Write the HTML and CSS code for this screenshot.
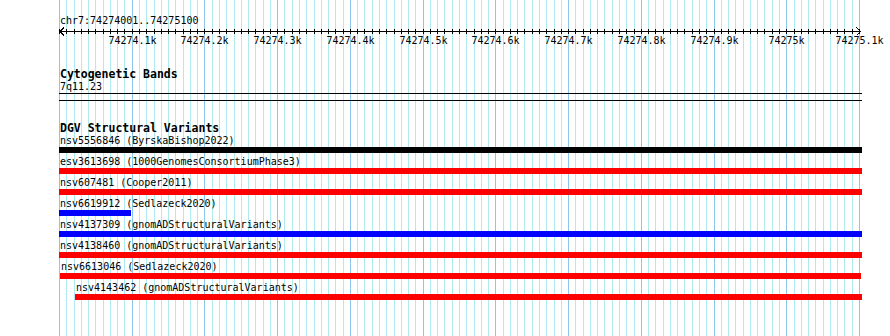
FILE: index.html
```html
<!DOCTYPE html>
<html lang="en">
  <head>
    <meta charset="UTF-8" />
    <meta name="viewport" content="width=device-width, initial-scale=1.0" />
    <title>chr7:74274001..74275100</title>
    <link rel="stylesheet" href="styles.css">
  </head>
  <body>
    <div class="view">
      <div class="tracks">
        <!-- Gridlines (drawn by script) -->
        <svg class="grid" id="grid" width="803" height="336"></svg>

        <!-- Ruler -->
        <div class="ruler">
          <div class="ruler-label">chr7:74274001..74275100</div>
          <svg class="ruler-scale" id="scale" width="803" height="22"></svg>
        </div>

        <!-- Cytogenetic Bands -->
        <div class="track cyto-track">
          <div class="track-title">Cytogenetic Bands</div>
          <div class="feature-label">7q11.23</div>
          <div class="band"></div>
        </div>

        <!-- DGV Structural Variants -->
        <div class="track dgv-track">
          <div class="track-title">DGV Structural Variants</div>

          <div class="feature" style="margin-left: 0px">
            <div class="feature-label">nsv5556846 (ByrskaBishop2022)</div>
            <div class="feature-bar black" style="width: 803px"></div>
          </div>
          <div class="feature" style="margin-left: 0px">
            <div class="feature-label">esv3613698 (1000GenomesConsortiumPhase3)</div>
            <div class="feature-bar red" style="width: 803px"></div>
          </div>
          <div class="feature" style="margin-left: 0px">
            <div class="feature-label">nsv607481 (Cooper2011)</div>
            <div class="feature-bar red" style="width: 803px"></div>
          </div>
          <div class="feature" style="margin-left: 0px">
            <div class="feature-label">nsv6619912 (Sedlazeck2020)</div>
            <div class="feature-bar blue" style="width: 72px"></div>
          </div>
          <div class="feature" style="margin-left: 0px">
            <div class="feature-label">nsv4137309 (gnomADStructuralVariants)</div>
            <div class="feature-bar blue" style="width: 803px"></div>
          </div>
          <div class="feature" style="margin-left: 0px">
            <div class="feature-label">nsv4138460 (gnomADStructuralVariants)</div>
            <div class="feature-bar red" style="width: 803px"></div>
          </div>
          <div class="feature" style="margin-left: 1px">
            <div class="feature-label">nsv6613046 (Sedlazeck2020)</div>
            <div class="feature-bar red" style="width: 801px"></div>
          </div>
          <div class="feature" style="margin-left: 16px">
            <div class="feature-label">nsv4143462 (gnomADStructuralVariants)</div>
            <div class="feature-bar red" style="width: 787px"></div>
          </div>
        </div>
      </div>
    </div>

    <script>
      const SVG_NS = "http://www.w3.org/2000/svg";
      const START = 74274000;
      const BP_PER_PX = 1100 / 800;
      const STEP = 10 / BP_PER_PX;

      const grid = document.getElementById("grid");
      const scale = document.getElementById("scale");

      function el(parent, name, attrs) {
        const node = document.createElementNS(SVG_NS, name);
        for (const key in attrs) node.setAttribute(key, attrs[key]);
        parent.appendChild(node);
        return node;
      }

      // Gridlines und Ticks alle 10bp
      for (let k = 0; k <= 110; k++) {
        const x = Math.round(k * STEP) + 0.5;
        el(grid, "line", {
          x1: x, x2: x, y1: 0, y2: 336,
          class: k % 10 === 0 ? "major" : "minor",
        });
        el(scale, "line", { x1: x, x2: x, y1: 2, y2: 7, class: "tick" });
      }

      // Achse mit Pfeilen
      el(scale, "line", { x1: 1, x2: 801.5, y1: 4.5, y2: 4.5, class: "axis" });
      el(scale, "polyline", { points: "5,0.5 1,4.5 5,8.5", class: "axis" });
      el(scale, "polyline", { points: "797.5,0.5 801.5,4.5 797.5,8.5", class: "axis" });

      // Beschriftung alle 100bp
      for (let k = 1; k <= 11; k++) {
        const bp = START + k * 100;
        const label = (bp / 1000).toFixed(1).replace(/\.0$/, "") + "k";
        const text = el(scale, "text", {
          x: Math.round(k * STEP * 10) + 0.5,
          y: 17,
          "text-anchor": "middle",
        });
        text.textContent = label;
      }
    </script>
  </body>
</html>
```

FILE: styles.css
```css
body {
  margin: 0;
  background: #fff;
  color: #000;
  font-family: "DejaVu Sans Mono", monospace;
  font-size: 10px;
}

.view {
  padding-left: 59px;
}

.tracks {
  position: relative;
  z-index: 0;
  width: 803px;
  min-height: 100vh;
}

.grid {
  position: absolute;
  top: 0;
  left: 0;
  z-index: -1;
  shape-rendering: crispEdges;
}

.grid .minor {
  stroke: #aeeaf0;
  stroke-width: 1;
}

.grid .major {
  stroke: #8cc6ea;
  stroke-width: 1;
}

.ruler {
  padding-top: 15px;
}

.ruler-label {
  line-height: 12px;
  padding-left: 1px;
  white-space: nowrap;
}

.ruler-scale {
  display: block;
  overflow: visible;
}

.ruler-scale .tick,
.ruler-scale .axis {
  stroke: #000;
  stroke-width: 1;
  fill: none;
  shape-rendering: crispEdges;
}

.ruler-scale text {
  font-family: "DejaVu Sans Mono", monospace;
  font-size: 10px;
  fill: #000;
}

.track-title {
  font-size: 11.5px;
  font-weight: bold;
  line-height: 14px;
  padding-left: 1px;
  white-space: nowrap;
}

.feature-label {
  line-height: 12px;
  padding-left: 1px;
  white-space: nowrap;
}

.cyto-track {
  margin-top: 18px;
}

.band {
  height: 6px;
  border-top: 1px solid #000;
  border-bottom: 1px solid #000;
}

.dgv-track {
  margin-top: 20px;
}

.feature {
  margin-bottom: 3px;
}

.feature-bar {
  height: 6px;
}

.feature-bar.black {
  background: #000;
}

.feature-bar.red {
  background: #f00;
}

.feature-bar.blue {
  background: #00f;
}
```
